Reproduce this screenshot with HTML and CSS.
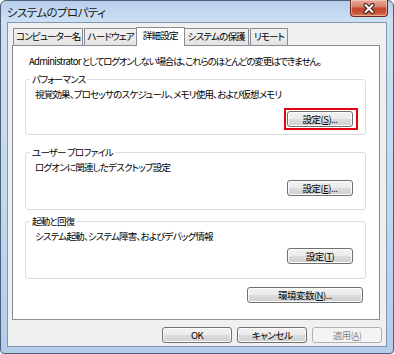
FILE: index.html
```html
<!DOCTYPE html>
<html lang="ja">
<head>
<meta charset="utf-8">
<title>システムのプロパティ</title>
<link rel="stylesheet" href="styles.css">
</head>
<body>
<div class="window">
  <div class="titlebar">
    <span class="title">システムのプロパティ</span>
    <div class="close">
      <svg width="14" height="11" viewBox="0 0 14 11">
        <path d="M3.5 2 L10.5 9 M10.5 2 L3.5 9" stroke="#3a2020" stroke-width="4" stroke-linecap="round"/>
        <path d="M3.5 2 L10.5 9 M10.5 2 L3.5 9" stroke="#ffffff" stroke-width="2" stroke-linecap="round"/>
      </svg>
    </div>
  </div>
  <div class="client">
    <div class="tabs">
      <div class="tab">コンピューター名</div>
      <div class="tab">ハードウェア</div>
      <div class="tab selected">詳細設定</div>
      <div class="tab">システムの保護</div>
      <div class="tab">リモート</div>
    </div>
    <div class="panel">
      <p class="note"><span class="latin">Administrator</span> としてログオンしない場合は、これらのほとんどの変更はできません。</p>
      <fieldset class="group first">
        <legend>パフォーマンス</legend>
        <p class="desc">視覚効果、プロセッサのスケジュール、メモリ使用、および仮想メモリ</p>
        <div class="actions"><span class="hl"><button class="btn small">設定(<u>S</u>)...</button></span></div>
      </fieldset>
      <fieldset class="group second">
        <legend>ユーザー プロファイル</legend>
        <p class="desc">ログオンに関連したデスクトップ設定</p>
        <div class="actions"><button class="btn small">設定(<u>E</u>)...</button></div>
      </fieldset>
      <fieldset class="group third">
        <legend>起動と回復</legend>
        <p class="desc">システム起動、システム障害、およびデバッグ情報</p>
        <div class="actions"><button class="btn small">設定(<u>T</u>)</button></div>
      </fieldset>
      <div class="env"><button class="btn wide">環境変数(<u>N</u>)...</button></div>
    </div>
    <div class="footer">
      <button class="btn dlg">OK</button>
      <button class="btn dlg">キャンセル</button>
      <button class="btn dlg disabled">適用(<u>A</u>)</button>
    </div>
  </div>
</div>
</body>
</html>
```

FILE: styles.css
```css
* { box-sizing: border-box; }

body {
  margin: 0;
  background: #ffffff;
  font-family: "Noto Sans CJK JP", "Noto Sans", sans-serif;
  font-size: 9.5px;
  font-feature-settings: "palt";
  letter-spacing: -0.8px;
  color: #000;
}

.window {
  width: 394px;
  height: 354px;
  display: flex;
  flex-direction: column;
  background: linear-gradient(to bottom, #b6cfea 0px, #cde0f3 20px, #c0d7ef 60%, #b3cdea 100%);
  border: 1px solid #4f6078;
  border-radius: 6px 6px 4px 4px;
  padding: 0 6px 6px 6px;
}

.titlebar {
  height: 21px;
  display: flex;
  justify-content: space-between;
  align-items: flex-start;
  flex: none;
}

.title {
  font-size: 11.5px;
  line-height: 22px;
  letter-spacing: -0.6px;
  color: #1a1a1a;
}

.close {
  width: 38px;
  height: 17px;
  margin-top: -1px;
  margin-right: -1px;
  border: 1px solid #6b2a20;
  border-top: none;
  border-radius: 0 0 4px 4px;
  background: linear-gradient(to bottom, #e9a99a 0%, #d98371 40%, #c4442b 55%, #c8553a 80%, #d97c5e 100%);
  display: flex;
  align-items: center;
  justify-content: center;
  box-shadow: inset 0 0 0 1px rgba(255, 220, 210, 0.5);
}

.client {
  flex: 1;
  background: #f0f0f0;
  border: 1px solid #8396b0;
  display: flex;
  flex-direction: column;
  padding: 5px 6px 0 4px;
}

.tabs {
  display: flex;
  align-items: flex-end;
  height: 17px;
  padding-left: 1px;
  flex: none;
}

.tab {
  height: 17px;
  border: 1px solid #898c95;
  border-bottom: none;
  background: linear-gradient(to bottom, #f3f3f3, #e3e3e3);
  padding: 0 3px;
  line-height: 15px;
  margin-right: 1px;
  white-space: nowrap;
}

.tab:first-child { padding: 0 2px; }
.tab:nth-child(2) { padding: 0 2px; }

.tab.selected {
  height: 19px;
  background: #ffffff;
  margin: 0 -1px -1px -2px;
  padding: 0 6px;
  position: relative;
  z-index: 1;
}

.panel {
  flex: none;
  height: 275px;
  background: #ffffff;
  border: 1px solid #898c95;
  padding: 7px 13px 0 12px;
  display: flex;
  flex-direction: column;
}

.note {
  margin: 0;
  padding-left: 4px;
  line-height: 16px;
  white-space: nowrap;
  letter-spacing: -1.15px;
}

.latin { letter-spacing: -0.7px; }

.group {
  margin: 3px 0 0 0;
  border: 1px solid #d5dfe5;
  border-radius: 3px;
  min-width: 0;
}

.group.first { padding: 0 12px 7px 9px; }
.group.second { margin-top: 10px; padding: 0 12px 13px 9px; }
.group.third { margin-top: 4px; padding: 0 12px 14px 9px; }

.group legend {
  padding: 0 2px;
  margin-left: -5px;
  line-height: 14px;
}

.desc {
  margin: 1px 0 0 0;
  line-height: 14px;
  white-space: nowrap;
}

.actions {
  display: flex;
  justify-content: flex-end;
}

.first .actions { margin-top: 10px; }
.second .actions { margin-top: 6px; }
.third .actions { margin-top: 5px; }

.btn {
  height: 16px;
  border: 1px solid #707070;
  border-radius: 3px;
  background: linear-gradient(to bottom, #f2f2f2 0%, #ebebeb 50%, #dddddd 51%, #cfcfcf 100%);
  box-shadow: inset 0 0 0 1px #fbfbfb;
  font-family: inherit;
  font-size: 9.5px;
  font-feature-settings: "palt";
  letter-spacing: -0.5px;
  line-height: 14px;
  padding: 0;
  color: #000;
}

.small { width: 66px; }

.hl {
  display: flex;
  border: 2px solid #e60012;
  padding: 1px 3px 1px 1px;
  margin: -3px -5px -3px -3px;
}

.env {
  display: flex;
  justify-content: flex-end;
  margin-top: 8px;
  padding-right: 3px;
}

.wide { width: 116px; }

.footer {
  display: flex;
  justify-content: flex-end;
  gap: 5px;
  margin-top: 7px;
  margin-right: -2px;
}

.dlg { width: 70px; }

.disabled {
  border-color: #adb2b5;
  background: #f4f4f4;
  box-shadow: none;
  color: #8b8b8b;
}
```
